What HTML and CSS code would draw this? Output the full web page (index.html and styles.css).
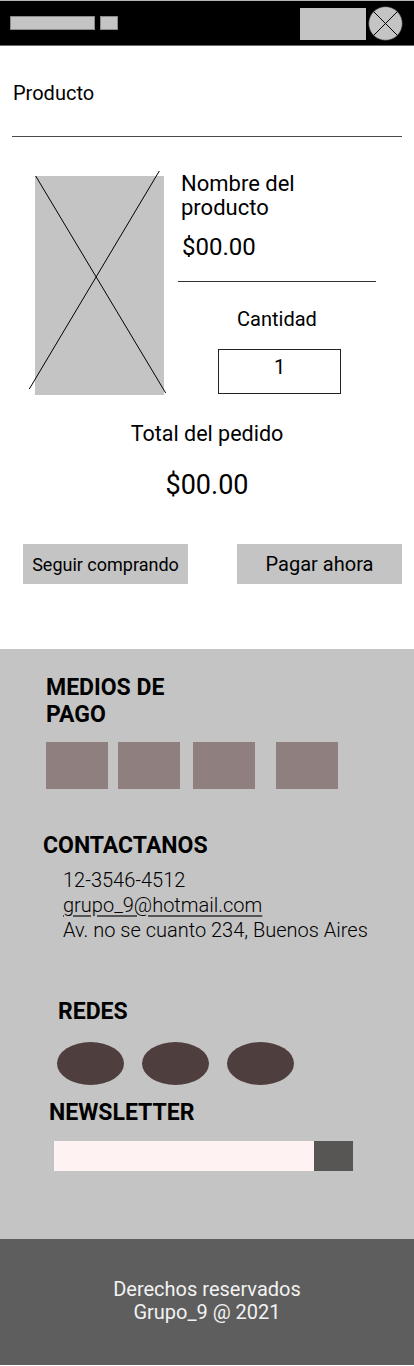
FILE: index.html
```html
<!DOCTYPE html>
<html lang="es">
<head>
<meta charset="utf-8">
<title>Carrito</title>
<link rel="stylesheet" href="styles.css">
</head>
<body>
<header class="topbar">
  <div class="topbar-left">
    <span class="bar-long"></span>
    <span class="bar-short"></span>
  </div>
  <div class="topbar-right">
    <span class="bar-box"></span>
    <svg class="close-icon" width="35" height="35" viewBox="0 0 35 35">
      <circle cx="17.5" cy="17.5" r="16.8" fill="#c4c4c4" stroke="#333" stroke-width="0.6"/>
      <line x1="5.6" y1="5.6" x2="29.4" y2="29.4" stroke="#000" stroke-width="1"/>
      <line x1="29.4" y1="5.6" x2="5.6" y2="29.4" stroke="#000" stroke-width="1"/>
    </svg>
  </div>
</header>

<main class="cart">
  <h1 class="cart-title">Producto</h1>
  <hr class="rule">

  <section class="item">
    <svg class="item-img" width="129" height="219" viewBox="0 0 129 219">
      <rect x="0" y="0" width="129" height="219" fill="#c4c4c4"/>
      <line x1="0.7" y1="0" x2="130.7" y2="217" stroke="#000" stroke-width="1"/>
      <line x1="124.3" y1="-5" x2="-5.7" y2="213" stroke="#000" stroke-width="1"/>
    </svg>
    <div class="item-info">
      <p class="item-name">Nombre del producto</p>
      <p class="item-price">$00.00</p>
      <hr class="item-rule">
      <p class="qty-label">Cantidad</p>
      <div class="qty-box">1</div>
    </div>
  </section>

  <section class="total">
    <p class="total-label">Total del pedido</p>
    <p class="total-price">$00.00</p>
  </section>

  <div class="actions">
    <button class="btn btn-small" type="button">Seguir comprando</button>
    <button class="btn" type="button">Pagar ahora</button>
  </div>
</main>

<footer class="site-footer">
  <h2 class="foot-heading heading-pay">MEDIOS DE PAGO</h2>
  <div class="pay-row">
    <span class="pay-box"></span>
    <span class="pay-box pay-2"></span>
    <span class="pay-box pay-3"></span>
    <span class="pay-box pay-4"></span>
  </div>

  <h2 class="foot-heading heading-contact">CONTACTANOS</h2>
  <ul class="contact-list">
    <li>12-3546-4512</li>
    <li><a class="mail" href="#">grupo_9@hotmail.com</a></li>
    <li>Av. no se cuanto 234, Buenos Aires</li>
  </ul>

  <h2 class="foot-heading heading-social">REDES</h2>
  <div class="social-row">
    <span class="social-dot"></span>
    <span class="social-dot"></span>
    <span class="social-dot"></span>
  </div>

  <h2 class="foot-heading heading-news">NEWSLETTER</h2>
  <form class="newsletter">
    <input class="news-input" type="email" aria-label="Email">
    <button class="news-btn" type="button" aria-label="Suscribirse"></button>
  </form>
</footer>

<div class="copyright">
  <p>Derechos reservados</p>
  <p>Grupo_9 @ 2021</p>
</div>
</body>
</html>
```

FILE: styles.css
```css
* {
  box-sizing: border-box;
}

html, body {
  margin: 0;
  padding: 0;
}

body {
  font-family: Roboto, "Liberation Sans", Arial, sans-serif;
  color: #000;
  background: #fff;
  width: 414px;
}

p, h1, h2, ul {
  margin: 0;
  padding: 0;
}

/* Top bar */
.topbar {
  height: 46px;
  background: #000;
  border-top: 1px solid #b5b5b5;
  border-bottom: 1px solid #6a6a6a;
  display: flex;
  align-items: center;
  justify-content: space-between;
  padding: 0 11px 0 10px;
}

.topbar-left {
  display: flex;
  align-items: center;
  gap: 5px;
}

.bar-long,
.bar-short {
  display: block;
  height: 14px;
  background: #c4c4c4;
  border: 1px solid #8a8a8a;
}

.bar-long { width: 85px; }
.bar-short { width: 18px; }

.topbar-right {
  display: flex;
  align-items: center;
  gap: 2px;
}

.bar-box {
  display: block;
  width: 66px;
  height: 32px;
  background: #c4c4c4;
  margin-top: 1px;
}

.close-icon {
  display: block;
}

/* Cart */
.cart {
  padding-bottom: 65px;
}

.cart-title {
  font-size: 20px;
  line-height: 24px;
  font-weight: 400;
  margin-top: 35px;
  padding-left: 13px;
}

.rule {
  margin: 31px 12px 0;
  border: 0;
  height: 1px;
  background: #4a4a4a;
}

.item {
  display: flex;
  align-items: flex-start;
  margin-top: 35px;
  padding-left: 35px;
  gap: 14px;
}

.item-img {
  display: block;
  overflow: visible;
  margin-top: 4px;
  flex: none;
}

.item-info {
  width: 198px;
  text-align: center;
}

.item-name {
  text-align: left;
  font-size: 22px;
  line-height: 24px;
  padding-left: 3px;
  max-width: 150px;
}

.item-price {
  text-align: left;
  font-size: 24px;
  line-height: 28px;
  margin-top: 13px;
  padding-left: 4px;
}

.item-rule {
  margin: 20px 0 0;
  border: 0;
  height: 1px;
  background: #333;
}

.qty-label {
  font-size: 20px;
  line-height: 24px;
  margin-top: 25px;
}

.qty-box {
  width: 123px;
  height: 45px;
  margin: 18px 0 0 40px;
  border: 1px solid #222;
  font-size: 20px;
  line-height: 34px;
  text-align: center;
}

.total {
  text-align: center;
  margin-top: 26px;
}

.total-label {
  font-size: 21.5px;
  line-height: 26px;
}

.total-price {
  font-size: 27px;
  line-height: 32px;
  margin-top: 22px;
}

.actions {
  display: flex;
  justify-content: space-between;
  margin-top: 43px;
  padding: 0 12px 0 23px;
}

.btn {
  width: 165px;
  height: 40px;
  border: 0;
  background: #c4c4c4;
  font-family: Roboto, "Liberation Sans", Arial, sans-serif;
  font-size: 20px;
  color: #000;
  padding: 0;
  display: flex;
  align-items: center;
  justify-content: center;
}

.btn-small {
  font-size: 18px;
}

/* Footer */
.site-footer {
  background: #c4c4c4;
  padding: 26px 0 68px;
}

.foot-heading {
  font-size: 23px;
  line-height: 26.5px;
  font-weight: 700;
}

.heading-pay {
  margin-left: 46px;
  max-width: 150px;
}

.pay-row {
  display: flex;
  margin: 14px 0 0 46px;
}

.pay-box {
  display: block;
  width: 62px;
  height: 47px;
  background: #8f7f7f;
}

.pay-2 { margin-left: 10px; }
.pay-3 { margin-left: 13px; }
.pay-4 { margin-left: 21px; }

.heading-contact {
  margin: 44px 0 0 43px;
}

.contact-list {
  list-style: none;
  margin: 8.5px 0 0 63px;
  font-size: 20px;
  line-height: 25px;
  font-weight: 300;
  color: #000;
}

.mail {
  color: #000;
  text-decoration: underline;
  text-decoration-color: #555;
  text-underline-offset: 3px;
}

.heading-social {
  margin: 55.5px 0 0 58px;
}

.social-row {
  display: flex;
  gap: 18px;
  margin: 16.5px 0 0 57px;
}

.social-dot {
  display: block;
  width: 67px;
  height: 43px;
  border-radius: 50%;
  background: #4f3e3e;
}

.heading-news {
  margin: 15.5px 0 0 49px;
}

.newsletter {
  display: flex;
  margin: 14.5px 0 0 54px;
}

.news-input {
  width: 260px;
  height: 30px;
  border: 0;
  background: #fff2f2;
  padding: 0;
  margin: 0;
}

.news-btn {
  width: 39px;
  height: 30px;
  border: 0;
  background: #585555;
  padding: 0;
  margin: 0;
}

.copyright {
  background: #5e5e5e;
  color: #f2f2f2;
  text-align: center;
  font-size: 20px;
  line-height: 23px;
  padding: 39px 0 41px;
}
```
